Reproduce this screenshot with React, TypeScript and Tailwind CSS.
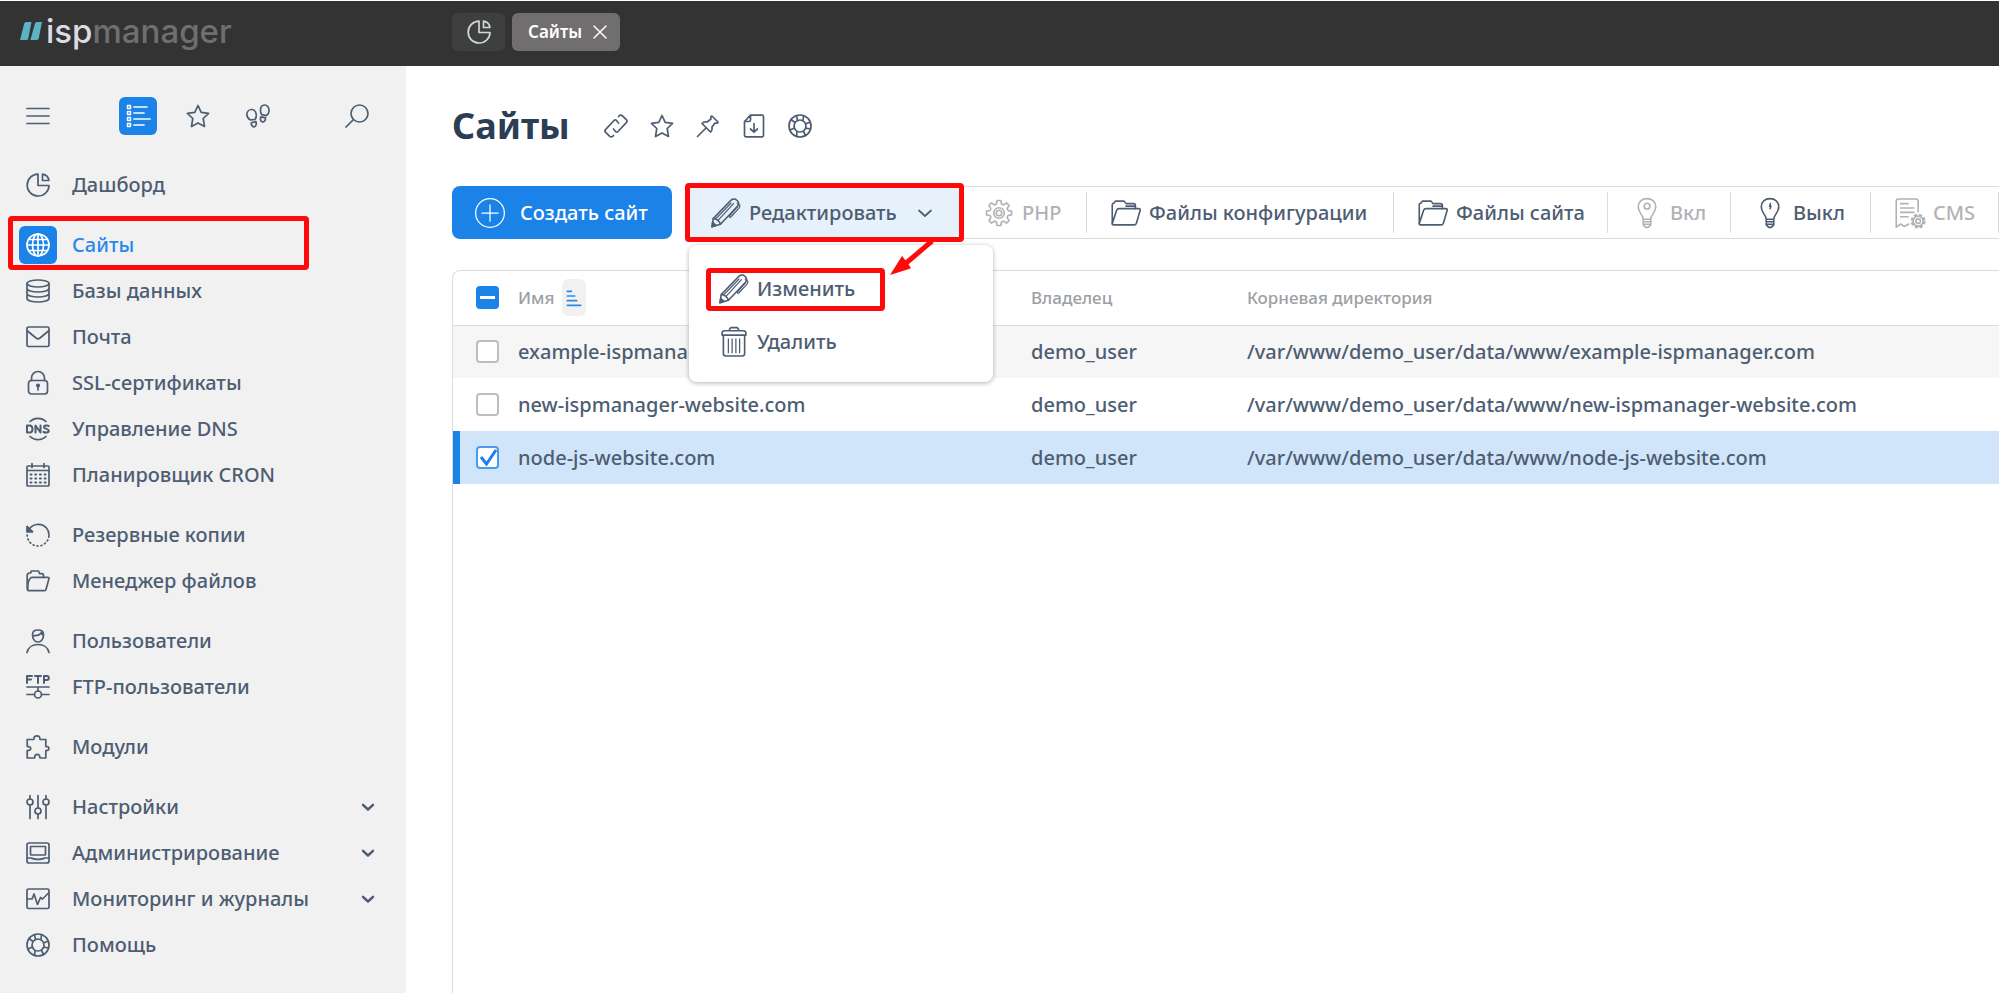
import React from "react";

interface IconProps {
  name: string;
  className?: string;
}

// Outline icons on a 24x24 grid
const ICONS: Record<string, React.ReactNode> = {
  menu: <path d="M1 4.500h22M1 12h22M1 19.500h22" />,
  list: (
    <>
      <path d="M1.500 1.500h3v3h-3zM1.500 7.500h3v3h-3zM1.500 13.500h3v3h-3zM1.500 19.500h3v3h-3z" strokeWidth="1.500" />
      <path d="M8 3h13M8 9h10M8 15h16M8 21h10" />
    </>
  ),
  star: <path d="M12 1.500l3.200 6.800 7.400 1-5.400 5.200 1.300 8-6.500-3.600-6.500 3.600 1.300-8L1.400 9.300l7.400-1z" />,
  feet: (
    <>
      <path d="M5.200 5.500c-2.600.2-4.400 2.800-4.300 5.500.1 2.200 1.600 4 3.600 5l4.700-.7c.9-1.500 1.300-3.200 1-5.200-.5-2.800-2.600-4.800-5-4.600z" />
      <path d="M5.200 18.800l4.700-1.200c.8 2.200.2 4.800-1.700 5.200-1.700.3-3-1.700-3-4z" />
      <path d="M18.600 1c-2.500.1-4 2.400-4.100 5-.1 1.700.3 3.200 1.200 4.700l4.700 1c1.500-1 2.600-2.700 2.700-5C23.300 3.800 21.200.9 18.600 1z" />
      <path d="M14.800 12.800l4.700 1.100c0 2.400-1.400 4.300-3.100 4-1.800-.3-2.400-2.700-1.600-5.100z" />
    </>
  ),
  search: (
    <>
      <circle cx="14.500" cy="9.500" r="8.500" />
      <path d="M8.500 15.500L1 23" />
    </>
  ),
  pie: (
    <>
      <path d="M12 1.200V12.500h11C23 18.500 18 23 12 23 6 23 1.200 18.200 1.200 12.200 1.200 6.200 6 1.200 12 1.200z" />
      <path d="M16.500 1.200c3.300.5 5.900 3.100 6.400 6.300h-6.400z" />
    </>
  ),
  globe: (
    <>
      <circle cx="12" cy="12" r="11" />
      <ellipse cx="12" cy="12" rx="5.500" ry="11" />
      <path d="M1 12h22M12 1v22M3 6.500h18M3 17.500h18" />
    </>
  ),
  database: (
    <>
      <ellipse cx="12" cy="4.500" rx="11" ry="3.500" />
      <path d="M1 4.500v15C1 21.500 6 23 12 23s11-1.500 11-3.500v-15M1 9.500c0 2 5 3.500 11 3.500s11-1.500 11-3.500M1 14.500C1 16.500 6 18 12 18s11-1.500 11-3.500" />
    </>
  ),
  mail: (
    <>
      <rect x="1" y="2" width="22" height="19.500" rx="1.500" />
      <path d="M1.500 6l8.500 7c1.200 1 2.800 1 4 0l8.500-7" />
    </>
  ),
  lock: (
    <>
      <rect x="2.500" y="9.500" width="19" height="13.500" rx="3" />
      <path d="M5.500 9.500V7a6.500 6.500 0 0113 0v2.500" />
      <circle cx="12" cy="14.500" r="1.200" fill="currentColor" />
      <path d="M12 15v4" />
    </>
  ),
  dns: (
    <>
      <path d="M4 4.500c4.500-4.300 11.500-4.300 16 0M4 19.500c4.500 4.300 11.500 4.300 16 0" />
      <path d="M1 8.500v7h2.500c4 0 4-7 0-7zM9.500 15.500v-7l5 7v-7M22.800 9c-1-.8-4.800-.9-4.800 1.200s4.800 1.300 4.800 3.500-4 2.200-5.300 1.200" strokeWidth="2" />
    </>
  ),
  calendar: (
    <>
      <path d="M2 3h20c.6 0 1 .4 1 1v18c0 .6-.4 1-1 1H2c-.6 0-1-.4-1-1V4c0-.6.400-1 1-1zM1 7.500h22M6 .500v4M18 .500v4" />
      <path d="M4.500 11.500h16M4.500 15.500h16M4.500 19.500h16" strokeDasharray="1 3.700" strokeWidth="2" />
    </>
  ),
  restore: (
    <>
      <path d="M2 8.500C5 .700 15-1.200 20.500 5c1.500 1.700 2.500 4 2.500 7M1.200 3.500v5.200h5.200" />
      <path d="M1.200 3.500v5.200h5.200z" fill="currentColor" />
      <path d="M1.200 12c0 6 4.800 11 10.800 11s11-5 11-11" strokeDasharray="1 3" />
    </>
  ),
  folderSmall: (
    <>
      <path d="M1.200 20V6.500c0-1.500 1-2.500 2.300-2.500h1l1-2h7l1.200 2.700h2c1.300 0 1.800.8 1.800 1.800v2" />
      <path d="M1.800 21.500V18c0-4 .8-7 2.700-9 .5-.5 1-.7 1.700-.7h15.600c.9 0 1.400.8 1.100 1.600L20 20.500c-.2.700-.9 1.200-1.600 1.200H2.500c-.5 0-.7-.2-.7-.2z" />
    </>
  ),
  user: (
    <>
      <path d="M6.500 5.500C6.500 2.800 8.500 1 12 1s5.500 1.800 5.500 4.500c0 4-2 7.500-5.500 7.500S6.500 9.500 6.500 5.500zM7 6.500c3.500.5 7-.8 8.500-3 .3 1.500.8 2.500 2 3" />
      <path d="M1 23.500C2 18.500 6.500 15.500 12 15.500s10 3 11 8" />
    </>
  ),
  ftp: (
    <>
      <path d="M1 8V1h5M1 4.500h4M9 1h6M12 1v7M18 8V1h3c2.400 0 2.400 4 0 4h-3" strokeWidth="2" />
      <path d="M1 12h22M12 12v4M1 19.500h7.500M15.500 19.500H23" />
      <circle cx="12" cy="19.500" r="3.500" />
    </>
  ),
  puzzle: (
    <path d="M1.200 4.500h6.300c.5 0 .8-.500.6-1-.6-3.600 6.300-3.600 5.700 0-.1.500.2 1 .7 1h5.300V11c0 .500.500.800 1 .700 2.800-.9 2.800 4.300 0 3.600-.5-.1-1 .2-1 .7v7h-5.500c-.5 0-.6-.400-.5-.900.5-3.600-5.700-3.600-5 0 .1.500-.2.900-.7.900H1.200v-7c0-.5.400-.7.900-.6 3.500.5 3.500-4.300 0-3.700-.5.100-.9-.2-.9-.700z" />
  ),
  sliders: (
    <>
      <path d="M4 .500v3.500M4 10v13.500M12 .500V13M12 19v4.500M20 .500v3.500M20 10v13.500" />
      <circle cx="4" cy="7" r="3" />
      <circle cx="12" cy="16" r="3" />
      <circle cx="20" cy="7" r="3" />
    </>
  ),
  server: (
    <>
      <rect x="1" y="2" width="22" height="20" rx="2" />
      <rect x="4.500" y="5.500" width="15" height="8.500" rx=".5" />
      <path d="M1.500 17h4c2 1.700 11 1.700 13 0h4" />
    </>
  ),
  monitor: (
    <>
      <rect x="1" y="2" width="22" height="19.500" rx="1.500" />
      <path d="M1.500 12h4.500l2-5 3.500 10.500 3-7 2 1.500L22.500 6" />
    </>
  ),
  help: (
    <>
      <circle cx="12" cy="12" r="11" />
      <circle cx="12" cy="12" r="6" />
      <path d="M8.500 1.800L9.500 6.500M3 5.500l4 3M15.500 1.800L15 6.500M22 8l-4.500 2M22.500 15l-4.800-.8M17.500 21.500l-2-4M8.500 22.200L9 17.500M2 16l4.500-2" />
    </>
  ),
  link: (
    <path d="M14.500 2.500c1.300-1.700 2.700-1.900 4-.6l3.800 3.800c1 1 1 2 0 3L14 17.500c-.9.9-1.700.9-2.500 0L9.500 15M9.500 21.500c-1.300 1.700-2.700 1.900-4 .6l-3.800-3.800c-1-1-1-2 0-3L10 6.500c.9-.9 1.700-.9 2.500 0l2 2.500" />
  ),
  pin: (
    <path d="M15 2.500c.5-.6 1-.6 1.500 0l5 5c.6.500.6 1 0 1.500-1 .3-1.700.3-2.500 0L16 13c.4 2.300 0 3.800-1.500 5L6 9.500c1.200-1.500 2.700-1.900 5-1.500l4-3c-.3-.8-.3-1.500 0-2.500zM10 14l-8.500 8.500" />
  ),
  fileDown: (
    <>
      <path d="M8.500 1.200H20c1 0 1.500.6 1.500 1.500v18.600c0 .9-.5 1.500-1.500 1.500H4c-1 0-1.500-.6-1.500-1.500V7.500zM8.500 1.200V6c0 1-.5 1.500-1.500 1.500H2.500" />
      <path d="M12 9.500v8.500M8.500 15l3.500 3.200L15.500 15" />
    </>
  ),
  chevron: <path d="M6 9.500l6 5.500 6-5.500" />,
  close: <path d="M3 3l18 18M21 3L3 21" strokeWidth="2.200" />,
  plus: (
    <>
      <circle cx="12" cy="12" r="11.500" />
      <path d="M12 5.500v13M5.500 12h13" />
    </>
  ),
  pencil: (
    <>
      <path d="M.8 23l1-6.500L15.500 2.200c1.500-1.600 3.700-1.800 5.200-.4 1.700 1.500 1.700 3.500.2 5.200L7.500 21z" />
      <path d="M1.800 16.500c2.700 0 5.200 2 5.700 4.500" />
      <path d="M16 4L4 16.500M18 4.500L6 17.500M21 4.500c2.300.6 2.700 2 1.200 3.800L16 15c-.8.800-1.700.3-1.200-.8L21 7" strokeWidth="1" />
      <path d="M.8 23l.5-3.500 2.700 2.300z" fill="currentColor" />
    </>
  ),
  trash: (
    <>
      <path d="M3.500 6.500v14.700c0 1.100.9 2 2 2h13c1.100 0 2-.9 2-2V6.500M2.500 6.500V5c0-1.200.8-2 2-2h15c1.200 0 2 .8 2 2v1.500zM8 3l.7-1.700c.2-.5.600-.8 1.100-.8h4.400c.5 0 .9.300 1.100.8L16 3" />
      <path d="M7.500 9.500v11M10.500 9.500v11M13.500 9.500v11M16.500 9.500v11" strokeWidth="1" />
    </>
  ),
  gear: (
    <>
      <path d="M10.500 2h3l.5 2.800 1.700.7L18 3.900 20.100 6l-1.600 2.300.7 1.700 2.800.5v3l-2.800.5-.7 1.700 1.600 2.300-2.100 2.100-2.300-1.600-1.700.7-.5 2.800h-3l-.5-2.800-1.700-.7L6 20.100 3.900 18l1.600-2.300-.7-1.700-2.800-.5v-3l2.800-.5.7-1.700L3.900 6 6 3.900l2.300 1.600 1.700-.7z" />
      <circle cx="12" cy="12" r="4.200" />
      <circle cx="12" cy="12" r="2.200" />
    </>
  ),
  folder: (
    <>
      <path d="M1 20.500V5.500C1 4.500 1.500 4 2.500 4l1-1.500h7l1.500 2h6c1 0 1.500.6 1.500 1.500v2.500H6.500c-1 0-1.700.4-2 1.300L1 20.500z" />
      <path d="M1 20.500c0 .6.400 1 1 1h16.500c.9 0 1.500-.4 1.800-1.300l3-10.200c.3-1-.2-1.500-1-1.500H19.500M12 6.500h7.500" />
    </>
  ),
  bulb: (
    <>
      <path d="M9 17c-.3-4-4-5-4-10 0-4 3-6.500 7-6.500s7 2.500 7 6.500c0 5-3.700 6-4 10zM9 17v4.500l2 2h2l2-2V17M9 19h6M9 21h6" />
      <path d="M12.300 4.500l-.6 2h1l-.6 2" />
    </>
  ),
  bulbOn: (
    <>
      <path d="M9 17c-.3-4-4-5-4-10 0-4 3-6.500 7-6.500s7 2.500 7 6.500c0 5-3.700 6-4 10zM9 17v4.500l2 2h2l2-2V17M9 19h6M9 21h6" />
      <circle cx="12" cy="6.500" r="2.300" />
    </>
  ),
  cms: (
    <>
      <path d="M18.500 11V2.500c0-1-.6-1.700-1.700-1.700H2.700C1.600.800 1 1.500 1 2.500v20.800l3.500-2.500 3 2 3.500-2M4.500 4.500h6M4.500 8h10.500M4.500 11.500h10.500M4.500 15h6" />
      <circle cx="18.500" cy="18.500" r="5" strokeDasharray="2.500 1.430" strokeLinecap="butt" strokeWidth="2" />
      <circle cx="18.500" cy="18.500" r="4" />
      <circle cx="18.500" cy="18.500" r="1.800" />
    </>
  ),
  sort: <path d="M2 2h6M2 9h11M2 16h14M2 23h20" strokeWidth="2.600" />,
};

const Icon: React.FC<IconProps> = ({ name, className = "w-6 h-6" }) => (
  <svg
    className={`shrink-0 overflow-visible ${className}`}
    viewBox="0 0 24 24"
    fill="none"
    stroke="currentColor"
    strokeWidth="1.700"
    strokeLinecap="round"
    strokeLinejoin="round"
    aria-hidden="true"
  >
    {ICONS[name]}
  </svg>
);

interface MenuItem {
  label: string;
  icon: string;
  active?: boolean;
  expandable?: boolean;
}

const menuGroups: MenuItem[][] = [
  [{ label: "Дашборд", icon: "pie" }],
  [
    { label: "Сайты", icon: "globe", active: true },
    { label: "Базы данных", icon: "database" },
    { label: "Почта", icon: "mail" },
    { label: "SSL-сертификаты", icon: "lock" },
    { label: "Управление DNS", icon: "dns" },
    { label: "Планировщик CRON", icon: "calendar" },
  ],
  [
    { label: "Резервные копии", icon: "restore" },
    { label: "Менеджер файлов", icon: "folderSmall" },
  ],
  [
    { label: "Пользователи", icon: "user" },
    { label: "FTP-пользователи", icon: "ftp" },
  ],
  [{ label: "Модули", icon: "puzzle" }],
  [
    { label: "Настройки", icon: "sliders", expandable: true },
    { label: "Администрирование", icon: "server", expandable: true },
    { label: "Мониторинг и журналы", icon: "monitor", expandable: true },
    { label: "Помощь", icon: "help" },
  ],
];

const titleActions = [
  { icon: "link", label: "Скопировать ссылку" },
  { icon: "star", label: "В избранное" },
  { icon: "pin", label: "Закрепить" },
  { icon: "fileDown", label: "Экспорт" },
  { icon: "help", label: "Справка" },
];

const tools = [
  { label: "PHP", icon: "gear", disabled: true, width: "w-[127px]" },
  { label: "Файлы конфигурации", icon: "folder", disabled: false, width: "w-[307px]" },
  { label: "Файлы сайта", icon: "folder", disabled: false, width: "w-[214px]" },
  { label: "Вкл", icon: "bulbOn", disabled: true, width: "w-[123px]" },
  { label: "Выкл", icon: "bulb", disabled: false, width: "w-[140px]" },
  { label: "CMS", icon: "cms", disabled: true, width: "w-[128px]" },
];

const sites = [
  { name: "example-ispmanager.com", owner: "demo_user", checked: false },
  { name: "new-ispmanager-website.com", owner: "demo_user", checked: false },
  { name: "node-js-website.com", owner: "demo_user", checked: true },
];

const Header: React.FC = () => (
  <header className="flex h-[66px] shrink-0 items-start border-t border-white bg-[#333333]">
    <a href="#" className="flex h-[60px] w-[452px] shrink-0 items-center pl-5">
      <svg className="mr-1 h-[18px] w-[22px]" viewBox="0 0 22 18" fill="#5bb3c3" aria-hidden="true">
        <path d="M4.200 1.500Q4.700 0 6.200 0h5.300L8.300 16.500Q8 18 6.300 18H0zM15 1.500Q15.500 0 17 0h5l-3.300 16.500Q18.300 18 16.600 18h-6.300z" />
      </svg>
      <span className="font-['Inter'] text-[33px] leading-10 text-[#706f70]">
        <span className="font-medium text-[#dcdce2]">isp</span>manager
      </span>
    </a>
    <div className="flex gap-[7px] pt-3">
      <button aria-label="Дашборд" className="flex h-[38px] w-[53px] items-center justify-center rounded-md bg-[#3e4040] text-[#d5d5da]">
        <Icon name="pie" />
      </button>
      <div className="flex h-[38px] items-center gap-[10px] rounded-md bg-[#706e6f] pr-3 pl-4 text-white">
        <a href="#" className="text-[17px] font-semibold">Сайты</a>
        <button aria-label="Закрыть">
          <Icon name="close" className="h-4 w-4" />
        </button>
      </div>
    </div>
  </header>
);

const MenuRow: React.FC<{ item: MenuItem }> = ({ item }) => (
  <li className="relative">
    <a href="#" className={`flex h-[46px] items-center gap-[15px] pr-7 pl-[19px] ${item.active ? "text-[#2b88ea]" : ""}`}>
      <span className={`flex h-[38px] w-[38px] shrink-0 items-center justify-center rounded-md ${item.active ? "bg-[#1b82e8] text-white" : ""}`}>
        <Icon name={item.icon} />
      </span>
      <span className="grow">{item.label}</span>
      {item.expandable && <Icon name="chevron" className="h-5 w-5 stroke-3" />}
    </a>
    {item.active && (
      <div className="pointer-events-none absolute -top-1.5 left-2 h-[54px] w-[301px] rounded-sm border-5 border-[#ff0a0a]"></div>
    )}
  </li>
);

const Sidebar: React.FC = () => (
  <aside className="w-[406px] shrink-0 bg-[#f1f1f1] pt-[31px]">
    <div className="flex items-center justify-between pr-[30px] pl-[19px]">
      <button aria-label="Меню" className="flex h-[38px] w-[38px] items-center justify-center">
        <Icon name="menu" />
      </button>
      <div className="flex gap-[22px]">
        <button aria-label="Список" className="flex h-[38px] w-[38px] items-center justify-center rounded-md bg-[#1b82e8] text-white">
          <Icon name="list" />
        </button>
        <button aria-label="Избранное" className="flex h-[38px] w-[38px] items-center justify-center">
          <Icon name="star" />
        </button>
        <button aria-label="История" className="flex h-[38px] w-[38px] items-center justify-center">
          <Icon name="feet" />
        </button>
      </div>
      <button aria-label="Поиск" className="flex h-[38px] w-[38px] items-center justify-center">
        <Icon name="search" />
      </button>
    </div>
    <nav className="mt-[27px] flex flex-col gap-[14px]">
      {menuGroups.map((group, i) => (
        <ul key={i}>
          {group.map(item => (
            <MenuRow key={item.label} item={item} />
          ))}
        </ul>
      ))}
    </nav>
  </aside>
);

const EditMenu: React.FC = () => (
  <div className="absolute top-[59px] left-[3px] z-10 w-[304px] rounded-lg bg-white pt-[17px] pb-[14px] pl-[30px] shadow-[0_1px_5px_rgba(0,0,0,0.3)]">
    <button className="relative flex h-[53px] items-center gap-2">
      <Icon name="pencil" className="h-[30px] w-[30px] stroke-[1.3]" />
      Изменить
      <span className="pointer-events-none absolute top-[6px] -left-[13px] h-[43px] w-[179px] rounded-sm border-5 border-[#ff0a0a]"></span>
    </button>
    <button className="flex h-[53px] items-center gap-2">
      <Icon name="trash" className="h-[30px] w-[30px] stroke-[1.3]" />
      Удалить
    </button>
    {/* Pointer from the button to the first item */}
    <svg className="pointer-events-none absolute -top-1 left-[200px] h-[36px] w-[48px]" viewBox="0 0 48 36" aria-hidden="true">
      <path d="M43 0L16 23" stroke="#ff0a0a" strokeWidth="5" />
      <path d="M1 34L13 15l4 5 5 7-2 1z" fill="#ff0a0a" />
    </svg>
  </div>
);

const Toolbar: React.FC = () => (
  <div className="mt-10 flex gap-[14px]">
    <button className="flex h-[53px] w-[220px] shrink-0 items-center gap-[15px] rounded-lg bg-[#1b82e8] pl-[23px] whitespace-nowrap text-white">
      <Icon name="plus" className="h-[30px] w-[30px] stroke-1" />
      Создать сайт
    </button>
    <div className="flex h-[53px] grow rounded-l-md border-y border-l border-[#dcdcdc]">
      <div className="relative -my-px -ml-px w-[274px] shrink-0">
        <button className="flex h-[53px] w-full items-center gap-2 bg-[#e6f1fb] pl-[25px]">
          <Icon name="pencil" className="h-[30px] w-[30px] stroke-[1.3]" />
          Редактировать
          <Icon name="chevron" className="ml-2 h-6 w-6" />
        </button>
        <div className="pointer-events-none absolute -top-[3px] -left-px z-20 h-[59px] w-[279px] rounded-sm border-5 border-[#ff0a0a]"></div>
        <EditMenu />
      </div>
      {tools.map(tool => (
        <div key={tool.label} className={`my-[5px] shrink-0 border-r border-[#dcdcdc] ${tool.width}`}>
          <button
            disabled={tool.disabled}
            className={`flex h-full items-center gap-2 pl-6 whitespace-nowrap ${tool.disabled ? "text-[#b0b2b5]" : ""}`}
          >
            <Icon name={tool.icon} className="h-[30px] w-[30px] stroke-[1.3]" />
            {tool.label}
          </button>
        </div>
      ))}
    </div>
  </div>
);

const Checkbox: React.FC<{ id: string; label?: string; checked?: boolean; mixed?: boolean }> = ({ id, label, checked, mixed }) => (
  <span className="relative ml-[23px] block h-[23px] w-[23px]">
    <input
      id={id}
      type="checkbox"
      defaultChecked={checked || mixed}
      aria-label={label}
      className={`block h-[23px] w-[23px] appearance-none rounded border-2 ${
        mixed ? "border-[#1b82e8] bg-[#1b82e8]" : checked ? "border-[#4a9bec] bg-white" : "border-[#bdbdbd] bg-white"
      }`}
    />
    <svg className="pointer-events-none absolute inset-0 h-[23px] w-[23px]" viewBox="0 0 23 23" fill="none" strokeWidth="3" aria-hidden="true">
      {mixed && <path d="M4 11.500h15" stroke="#fff" />}
      {checked && <path d="M5 11l5.500 7L20 4" stroke="#1b82e8" />}
    </svg>
  </span>
);

const SitesTable: React.FC = () => (
  <div className="mt-[31px] grow overflow-hidden rounded-tl-lg border-t border-l border-[#dcdcdc]">
    <table className="w-full table-fixed border-collapse text-left">
      <colgroup>
        <col className="w-[65px]" />
        <col className="w-[513px]" />
        <col className="w-[216px]" />
        <col />
      </colgroup>
      <thead>
        <tr className="h-[54px] border-b border-[#dcdcdc] text-[17px] text-[#9c9fa3]">
          <th><Checkbox id="all" label="Выбрать все" mixed /></th>
          <th className="font-medium">
            <div className="flex items-center gap-2">
              Имя
              <button aria-label="Сортировка" className="flex h-[37px] w-6 items-center justify-center rounded-md bg-[#f1f1f1] text-[#2b88ea]">
                <Icon name="sort" className="h-4 w-4" />
              </button>
            </div>
          </th>
          <th className="font-medium">Владелец</th>
          <th className="font-medium">Корневая директория</th>
        </tr>
      </thead>
      <tbody>
        {sites.map((site, i) => (
          <tr key={site.name} className={`h-[53px] whitespace-nowrap ${site.checked ? "bg-[#d0e5f9]" : i % 2 === 0 ? "bg-[#f6f6f6]" : ""}`}>
            <td className={site.checked ? "shadow-[inset_7px_0_0_#1b82e8]" : ""}>
              <Checkbox id={`site-${i}`} checked={site.checked} />
            </td>
            <td><label htmlFor={`site-${i}`}>{site.name}</label></td>
            <td>{site.owner}</td>
            <td>/var/www/{site.owner}/data/www/{site.name}</td>
          </tr>
        ))}
      </tbody>
    </table>
  </div>
);

const App: React.FC = () => {
  return (
    <div className="flex min-h-screen flex-col overflow-hidden bg-white font-['Noto_Sans',sans-serif] text-[20px] leading-7 font-medium text-[#4d5d72]">
      <Header />
      <div className="flex grow">
        <Sidebar />
        <main className="flex min-w-0 grow flex-col pt-10 pl-[46px]">
          <div className="flex h-10 items-center gap-[34px]">
            <h1 className="text-[36px] font-bold text-[#2c3e53]">Сайты</h1>
            <div className="flex gap-[22px]">
              {titleActions.map(action => (
                <button key={action.label} aria-label={action.label}>
                  <Icon name={action.icon} />
                </button>
              ))}
            </div>
          </div>
          <Toolbar />
          <SitesTable />
        </main>
      </div>
    </div>
  );
};

export default App;
